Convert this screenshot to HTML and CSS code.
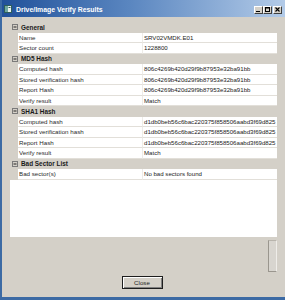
FILE: index.html
```html
<!DOCTYPE html>
<html>
<head>
<meta charset="utf-8">
<link rel="stylesheet" href="styles.css">
</head>
<body>
<div class="window">
  <div class="titlebar">
    <svg class="app-icon" width="8" height="8" viewBox="0 0 8 8"><rect x="0.5" y="0.5" width="7" height="7" fill="#e8f2f0" stroke="#2e5e5a"/><rect x="1" y="1" width="3" height="6" fill="#6fa8a0"/><rect x="4.5" y="2" width="2" height="1" fill="#2e5e5a"/></svg>
    <span class="title">Drive/Image Verify Results</span>
    <div class="controls">
      <span class="ctl"><svg width="7" height="6" viewBox="0 0 7 6"><rect x="1" y="4" width="4" height="1" fill="#000"/></svg></span>
      <span class="ctl"><svg width="7" height="6" viewBox="0 0 7 6"><rect x="1.5" y="0.5" width="4" height="4" fill="none" stroke="#000"/><rect x="1" y="0" width="5" height="1.5" fill="#000"/></svg></span>
      <span class="ctl ctl-close"><svg width="7" height="6" viewBox="0 0 7 6"><path d="M1.5 0.5 L5.5 4.5 M5.5 0.5 L1.5 4.5" stroke="#000" stroke-width="1.1"/></svg></span>
    </div>
  </div>
  <div class="client">
    <div class="grid">
      <div class="cat"><svg class="toggle" width="6" height="6" viewBox="0 0 6 6"><rect x="0.5" y="0.5" width="5" height="5" fill="none" stroke="#7a7a7a"/><rect x="1.5" y="2.5" width="3" height="1" fill="#222"/></svg><span>General</span></div>
      <div class="row"><div class="gutter"></div><div class="label">Name</div><div class="value">SRV02VMDK.E01</div></div>
      <div class="row"><div class="gutter"></div><div class="label">Sector count</div><div class="value">1228800</div></div>
      <div class="cat"><svg class="toggle" width="6" height="6" viewBox="0 0 6 6"><rect x="0.5" y="0.5" width="5" height="5" fill="none" stroke="#7a7a7a"/><rect x="1.5" y="2.5" width="3" height="1" fill="#222"/></svg><span>MD5 Hash</span></div>
      <div class="row"><div class="gutter"></div><div class="label">Computed hash</div><div class="value">806c4269b420d29f9b87953e32ba91bb</div></div>
      <div class="row"><div class="gutter"></div><div class="label">Stored verification hash</div><div class="value">806c4269b420d29f9b87953e32ba91bb</div></div>
      <div class="row"><div class="gutter"></div><div class="label">Report Hash</div><div class="value">806c4269b420d29f9b87953e32ba91bb</div></div>
      <div class="row"><div class="gutter"></div><div class="label">Verify result</div><div class="value">Match</div></div>
      <div class="cat"><svg class="toggle" width="6" height="6" viewBox="0 0 6 6"><rect x="0.5" y="0.5" width="5" height="5" fill="none" stroke="#7a7a7a"/><rect x="1.5" y="2.5" width="3" height="1" fill="#222"/></svg><span>SHA1 Hash</span></div>
      <div class="row"><div class="gutter"></div><div class="label">Computed hash</div><div class="value">d1db0beb56c6bac220375f858506aabd3f69d825</div></div>
      <div class="row"><div class="gutter"></div><div class="label">Stored verification hash</div><div class="value">d1db0beb56c6bac220375f858506aabd3f69d825</div></div>
      <div class="row"><div class="gutter"></div><div class="label">Report Hash</div><div class="value">d1db0beb56c6bac220375f858506aabd3f69d825</div></div>
      <div class="row"><div class="gutter"></div><div class="label">Verify result</div><div class="value">Match</div></div>
      <div class="cat"><svg class="toggle" width="6" height="6" viewBox="0 0 6 6"><rect x="0.5" y="0.5" width="5" height="5" fill="none" stroke="#7a7a7a"/><rect x="1.5" y="2.5" width="3" height="1" fill="#222"/></svg><span>Bad Sector List</span></div>
      <div class="row"><div class="gutter"></div><div class="label">Bad sector(s)</div><div class="value">No bad sectors found</div></div>
      <div class="filler"></div>
    </div>
    <div class="lower">
      <div class="help"></div>
      <button class="btn">Close</button>
    </div>
  </div>
</div>
</body>
</html>
```

FILE: styles.css
```css
* { box-sizing: border-box; }
html, body { margin: 0; padding: 0; }
body {
  width: 285px;
  height: 300px;
  overflow: hidden;
  background: #d4d0c8;
  font-family: "Liberation Sans", Arial, sans-serif;
}
.window {
  width: 285px;
  height: 300px;
  border-left: 2px solid #3c6aa4;
  border-bottom: 3px solid #3c6aa4;
  display: flex;
  flex-direction: column;
  background: #d4d0c8;
}
.titlebar {
  height: 17px;
  flex: none;
  background: linear-gradient(to right, #21519a 0%, #5a86c0 45%, #b3cbe8 100%);
  display: flex;
  align-items: center;
  padding: 1px 3px 0 2px;
}
.app-icon { flex: none; margin-right: 4px; }
.title {
  flex: 1;
  color: #fff;
  font-weight: bold;
  font-size: 6.9px;
  white-space: nowrap;
}
.controls { display: flex; gap: 0; align-items: center; margin-top: 2px; }
.ctl {
  width: 9px;
  height: 8px;
  background: #d4d0c8;
  border: 1px solid;
  border-color: #fff #404040 #404040 #fff;
  display: flex;
  align-items: center;
  justify-content: center;
}
.ctl svg { display: block; }
.ctl-close { margin-left: 1px; }
.client {
  flex: 1;
  display: flex;
  flex-direction: column;
  padding: 5px 8px 0 8px;
}
.grid {
  height: 215px;
  flex: none;
  display: flex;
  flex-direction: column;
  background: #fff;
  color: #1e1e1e;
}
.cat {
  height: 10.5px;
  flex: none;
  background: #d4d0c8;
  display: flex;
  align-items: center;
  font-weight: bold;
  font-size: 6.4px;
  color: #1a1a1a;
}
.toggle { margin-left: 2px; margin-right: 3px; flex: none; }
.row {
  height: 10.5px;
  flex: none;
  display: flex;
  font-size: 6.2px;
  line-height: 9.5px;
}
.gutter { width: 8px; flex: none; background: #d4d0c8; }
.label {
  width: 125px;
  flex: none;
  padding-left: 1px;
  border-bottom: 1px solid #e2dfd9;
  border-right: 1px solid #eeece8;
  white-space: nowrap;
  color: #2a2a2a;
}
.value {
  flex: 1;
  padding-left: 1px;
  font-size: 6.1px;
  border-bottom: 1px solid #e2dfd9;
  white-space: nowrap;
  overflow: hidden;
  color: #1a1a1a;
}
.filler { flex: 1; background: #fff; }
.lower {
  flex: 1;
  display: flex;
  flex-direction: column;
}
.help {
  align-self: flex-end;
  width: 9px;
  height: 32px;
  margin-top: 3px;
  border: 1px solid #9a968e;
  border-right-color: #efede9;
  border-top-color: #b8b4ac;
  background: #d8d5cf;
}
.btn {
  align-self: center;
  width: 41px;
  height: 13px;
  margin-top: 4px;
  margin-left: -3px;
  padding: 0;
  background: #d4d0c8;
  border: 1px solid #1e1e1e;
  box-shadow: inset 1px 1px 0 #fff, inset -1px -1px 0 #808080;
  font-family: "Liberation Sans", Arial, sans-serif;
  font-size: 6.2px;
  color: #1e1e1e;
}
```
